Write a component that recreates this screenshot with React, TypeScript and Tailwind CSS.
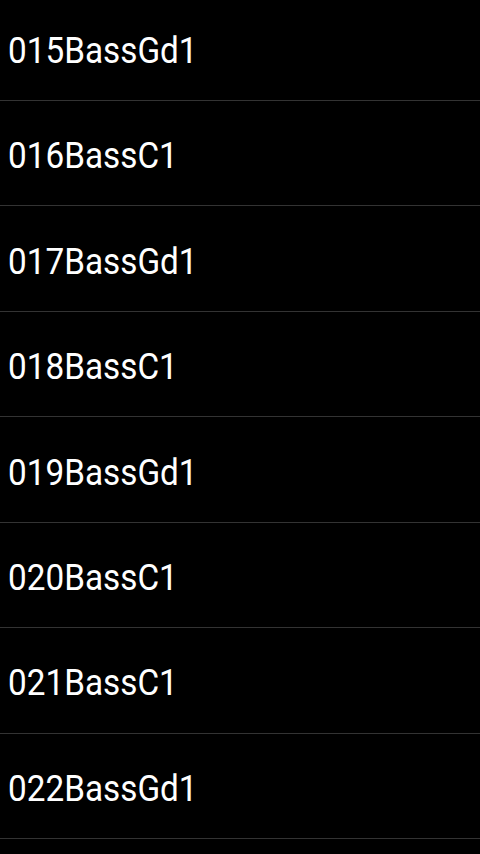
import React from 'react';

const items = [
  '015BassGd1',
  '016BassC1',
  '017BassGd1',
  '018BassC1',
  '019BassGd1',
  '020BassC1',
  '021BassC1',
  '022BassGd1',
];

export default function App() {
  return (
    <div className="w-[480px] h-[854px] overflow-hidden bg-black">
      {/* list is scrolled a few pixels */}
      <div className="-mt-[4.4px] flex flex-col">
        {items.map((name) => (
          <div
            key={name}
            className="h-[105.43px] shrink-0 flex items-center pl-[8px] pt-[6px] border-b-[1.5px] border-[#333333] box-border"
          >
            <span className="inline-block origin-left scale-x-[0.925] text-white text-[36px] leading-none font-['Roboto',sans-serif]">
              {name}
            </span>
          </div>
        ))}
      </div>
    </div>
  );
}
